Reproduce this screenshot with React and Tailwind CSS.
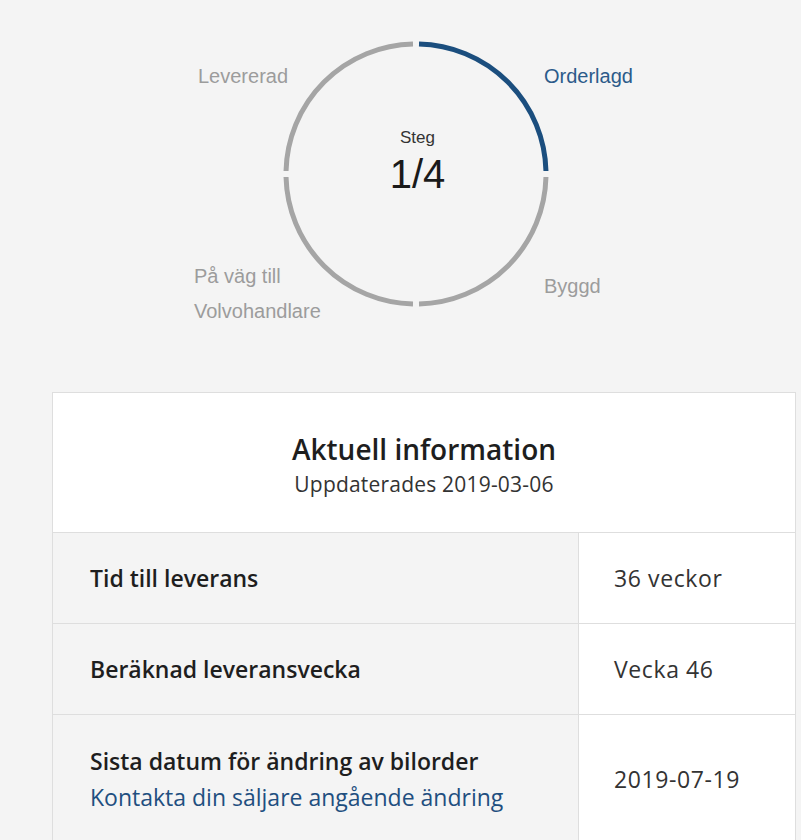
const arcs = [
  { d: "M138 5.03 A130 130 0 0 1 264.97 132", color: "#1b4e7e" },
  { d: "M264.97 138 A130 130 0 0 1 138 264.97", color: "#a5a5a5" },
  { d: "M132 264.97 A130 130 0 0 1 5.03 138", color: "#a5a5a5" },
  { d: "M5.03 132 A130 130 0 0 1 132 5.03", color: "#a5a5a5" },
];

const rows = [
  { label: "Tid till leverans", value: "36 veckor" },
  { label: "Beräknad leveransvecka", value: "Vecka 46" },
  {
    label: "Sista datum för ändring av bilorder",
    link: "Kontakta din säljare angående ändring",
    value: "2019-07-19",
  },
];

const App = () => {
  return (
    <div className="min-h-screen bg-[#f4f4f4] pt-[39px] overflow-hidden">
      {/* Step circle */}
      <div className="flex h-[270px] pl-[194px] font-['Liberation_Sans',Arial,sans-serif] text-[20px] text-[#9c9c9c]">
        <div className="w-[87px] flex flex-col whitespace-nowrap">
          <div className="mt-[26px] leading-[23px] pl-[4px]">Levererad</div>
          <div className="mt-[171px] leading-[35px]">
            <div>På väg till</div>
            <div>Volvohandlare</div>
          </div>
        </div>

        <div className="grid w-[270px] h-[270px]">
          <svg
            className="col-start-1 row-start-1"
            width="270"
            height="270"
            viewBox="0 0 270 270"
          >
            {arcs.map((arc, i) => (
              <path
                key={i}
                d={arc.d}
                fill="none"
                stroke={arc.color}
                strokeWidth="5"
              />
            ))}
          </svg>
          <div className="col-start-1 row-start-1 flex flex-col items-center pt-[89px] pl-[3px] text-[#1a1a1a]">
            <div className="text-[17px] leading-[20px] text-[#333]">Steg</div>
            <div className="mt-[3px] text-[40px] leading-[46px]">1/4</div>
          </div>
        </div>

        <div className="-ml-[7px] flex flex-col whitespace-nowrap">
          <div className="mt-[26px] leading-[23px] text-[#2c5b8a]">Orderlagd</div>
          <div className="mt-[187px] leading-[23px]">Byggd</div>
        </div>
      </div>

      {/* Info card */}
      <div className="mt-[83px] ml-[52px] mr-[5px] bg-white border border-b-0 border-[#dedede] font-['Open_Sans',sans-serif] text-[#222]">
        <div className="flex flex-col items-center pt-[39px] pb-[35px]">
          <h1 className="text-[28px] leading-[34px] font-semibold text-[#1e1e1e]">
            Aktuell information
          </h1>
          <p className="mt-[5px] text-[21px] leading-[26px] tracking-[0.2px] text-[#333]">
            Uppdaterades 2019-03-06
          </p>
        </div>

        {rows.map((row) => (
          <div
            key={row.label}
            className="grid grid-cols-[525px_1fr] border-t border-[#dedede]"
          >
            <div
              className={`bg-[#f4f4f4] pl-[37px] flex flex-col justify-center ${
                row.link ? "py-[28px]" : "h-[90px]"
              }`}
            >
              <div className="text-[23px] leading-[36px] font-semibold text-[#1e1e1e]">
                {row.label}
              </div>
              {row.link && (
                <a className="text-[23px] leading-[36px] text-[#1f4f80]">
                  {row.link}
                </a>
              )}
            </div>
            <div className="border-l border-[#dedede] pl-[35px] flex items-center text-[23px] tracking-[0.6px] text-[#333]">
              {row.value}
            </div>
          </div>
        ))}
      </div>
    </div>
  );
};

export default App;
